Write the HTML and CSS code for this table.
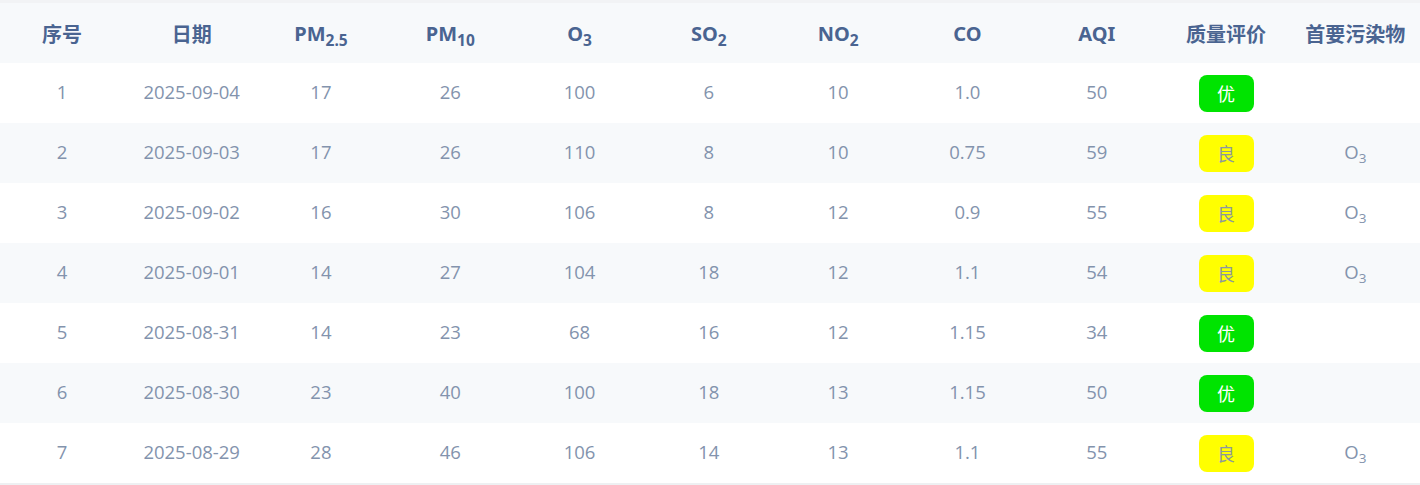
FILE: index.html
```html
<!DOCTYPE html>
<html lang="zh">
<head>
<meta charset="utf-8">
<title>空气质量</title>
<link rel="stylesheet" href="styles.css">
</head>
<body>
<table class="aq">
<colgroup><col class="c-first"><col span="10"></colgroup>
<thead>
<tr>
<th class="first">序号</th><th>日期</th><th>PM<sub>2.5</sub></th><th>PM<sub>10</sub></th><th>O<sub>3</sub></th><th>SO<sub>2</sub></th><th>NO<sub>2</sub></th><th>CO</th><th>AQI</th><th>质量评价</th><th>首要污染物</th>
</tr>
</thead>
<tbody>
<tr><td class="first">1</td><td>2025-09-04</td><td>17</td><td>26</td><td>100</td><td>6</td><td>10</td><td>1.0</td><td>50</td><td><span class="badge good">优</span></td><td></td></tr>
<tr><td class="first">2</td><td>2025-09-03</td><td>17</td><td>26</td><td>110</td><td>8</td><td>10</td><td>0.75</td><td>59</td><td><span class="badge mod">良</span></td><td>O<sub>3</sub></td></tr>
<tr><td class="first">3</td><td>2025-09-02</td><td>16</td><td>30</td><td>106</td><td>8</td><td>12</td><td>0.9</td><td>55</td><td><span class="badge mod">良</span></td><td>O<sub>3</sub></td></tr>
<tr><td class="first">4</td><td>2025-09-01</td><td>14</td><td>27</td><td>104</td><td>18</td><td>12</td><td>1.1</td><td>54</td><td><span class="badge mod">良</span></td><td>O<sub>3</sub></td></tr>
<tr><td class="first">5</td><td>2025-08-31</td><td>14</td><td>23</td><td>68</td><td>16</td><td>12</td><td>1.15</td><td>34</td><td><span class="badge good">优</span></td><td></td></tr>
<tr><td class="first">6</td><td>2025-08-30</td><td>23</td><td>40</td><td>100</td><td>18</td><td>13</td><td>1.15</td><td>50</td><td><span class="badge good">优</span></td><td></td></tr>
<tr><td class="first">7</td><td>2025-08-29</td><td>28</td><td>46</td><td>106</td><td>14</td><td>13</td><td>1.1</td><td>55</td><td><span class="badge mod">良</span></td><td>O<sub>3</sub></td></tr>
</tbody>
</table>
</body>
</html>
```

FILE: styles.css
```css
html, body {
  margin: 0;
  padding: 0;
  background: #ffffff;
}
body {
  font-family: "Open Sans", "Noto Sans", "Noto Sans CJK SC", sans-serif;
}
.aq {
  width: 1420px;
  border-collapse: collapse;
  table-layout: fixed;
  border-top: 3px solid #f2f3f5;
  border-bottom: 2px solid #eef0f2;
}
.c-first {
  width: 127px;
}
.aq th, .aq td {
  padding: 0;
  text-align: center;
  vertical-align: middle;
}
.aq .first {
  padding-right: 3px;
}
.aq th {
  height: 60px;
  background: #f7f9fb;
  color: #4a6491;
  font-size: 20px;
  font-weight: 700;
  font-family: "Noto Sans", "Noto Sans CJK SC", sans-serif;
}
.aq th sub {
  font-size: 15.5px;
  vertical-align: -5px;
  line-height: 0;
}
.aq td {
  height: 57px;
  padding-bottom: 3px;
  color: #8393ad;
  font-size: 18.5px;
}
.aq td sub {
  font-size: 13.5px;
  vertical-align: -4px;
  line-height: 0;
}
.aq tbody tr:nth-child(even) td {
  background: #f7f9fb;
}
.badge {
  display: inline-block;
  width: 55px;
  height: 37px;
  line-height: 37px;
  border-radius: 8px;
  margin-top: 3px;
  font-size: 18px;
  font-family: "Noto Sans CJK SC", sans-serif;
}
.badge.good {
  background: #00e400;
  color: #ffffff;
}
.badge.mod {
  background: #ffff00;
  color: #8c9a9c;
}
```
